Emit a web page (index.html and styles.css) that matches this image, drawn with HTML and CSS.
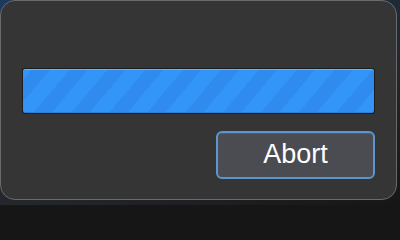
FILE: index.html
```html
<!DOCTYPE html>
<html>
<head>
<meta charset="utf-8">
<link rel="stylesheet" href="styles.css">
</head>
<body>
<div class="window">
  <div class="progress"><div class="fill"></div></div>
  <div class="actions">
    <button class="btn">Abort</button>
  </div>
</div>
</body>
</html>
```
FILE: styles.css
```css
html {
  background: #161616;
}
html, body {
  margin: 0;
  padding: 0;
  width: 400px;
  height: 205px;
  overflow: hidden;
}
body {
  background: linear-gradient(160deg, #1b3a5e 0%, #1d2c3e 30%, #24272c 60%, #161616 100%);
  font-family: "Helvetica Neue", "Liberation Sans", Arial, sans-serif;
}
.window {
  box-sizing: border-box;
  width: 397px;
  height: 200px;
  margin: 0;
  background: #353535;
  border: 1px solid #6a6a6a;
  border-radius: 15px;
  padding: 67px 21px 0 21px;
  display: flex;
  flex-direction: column;
}
.progress {
  height: 46px;
  border-radius: 3px;
  background: #1c1c1c;
  padding: 1px;
  box-sizing: border-box;
}
.fill {
  height: 100%;
  border-radius: 2px;
  background-color: #3294f6;
  background-image: repeating-linear-gradient(-50deg, #3395f7 0 15px, #2f8cee 15px 29px);
  box-shadow: inset 0 1px 0 #6ab4ff, inset 0 -1px 0 #2a7fd8;
}
.actions {
  display: flex;
  justify-content: flex-end;
  margin-top: 17px;
}
.btn {
  width: 159px;
  height: 48px;
  box-sizing: border-box;
  border: 2px solid #5d95d2;
  border-radius: 6px;
  background: #4b4c51;
  color: #ffffff;
  font-family: "Helvetica Neue", "Liberation Sans", Arial, sans-serif;
  font-size: 27px;
  padding: 0 0 1px 0;
  line-height: 1;
  box-shadow: inset 0 1px 0 #5a5b60;
}
```
